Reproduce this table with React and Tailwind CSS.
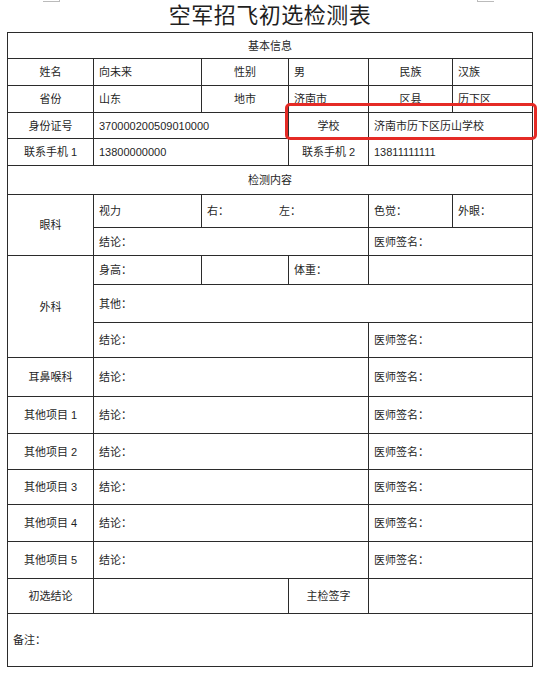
import React from 'react';

const font = { fontFamily: '"Liberation Sans", "Noto Sans CJK SC", sans-serif' };

const otherRows = ['耳鼻喉科', '其他项目 1', '其他项目 2', '其他项目 3', '其他项目 4', '其他项目 5'];
const otherHeights = ['h-[39px]', 'h-[37px]', 'h-[36px]', 'h-[35px]', 'h-[37px]', 'h-[37px]'];

function Label({ children, ...rest }) {
  return (
    <td className="border border-[#2b2b2b] text-center align-middle" {...rest}>
      {children}
    </td>
  );
}

function Value({ children, ...rest }) {
  return (
    <td className="border border-[#2b2b2b] pl-[5px] text-left align-middle" {...rest}>
      {children}
    </td>
  );
}

export default function App() {
  return (
    <div className="relative w-[540px] h-[675px] bg-white text-[#1f1f1f] overflow-hidden" style={font}>
      {/* page corner marks */}
      <div className="absolute left-[43px] top-0 w-[17px] h-[2px] border-b border-r border-[#bbb]" />
      <div className="absolute left-[477px] top-0 w-[17px] h-[2px] border-b border-l border-[#bbb]" />

      {/* Title */}
      <h1 className="h-[32px] pt-[2px] text-center text-[22px] leading-[28px] font-normal tracking-[0.5px]">
        空军招飞初选检测表
      </h1>

      {/* Form */}
      <div className="relative ml-[7px] w-[525px]">
        <table className="w-[525px] table-fixed border-collapse text-[11px] leading-[14px]">
          <colgroup>
            <col className="w-[86px]" />
            <col className="w-[108px]" />
            <col className="w-[87px]" />
            <col className="w-[80px]" />
            <col className="w-[84px]" />
            <col className="w-[80px]" />
          </colgroup>
          <tbody>
            <tr className="h-[26px]">
              <Label colSpan={6}>基本信息</Label>
            </tr>
            <tr className="h-[27px]">
              <Label>姓名</Label>
              <Value>向未来</Value>
              <Label>性别</Label>
              <Value>男</Value>
              <Label>民族</Label>
              <Value>汉族</Value>
            </tr>
            <tr className="h-[27px]">
              <Label>省份</Label>
              <Value>山东</Value>
              <Label>地市</Label>
              <Value>济南市</Value>
              <Label>区县</Label>
              <Value>历下区</Value>
            </tr>
            <tr className="h-[26px]">
              <Label>身份证号</Label>
              <Value colSpan={2}>370000200509010000</Value>
              <Label>学校</Label>
              <Value colSpan={2}>济南市历下区历山学校</Value>
            </tr>
            <tr className="h-[27px]">
              <Label>联系手机 1</Label>
              <Value colSpan={2}>13800000000</Value>
              <Label>联系手机 2</Label>
              <Value colSpan={2}>13811111111</Value>
            </tr>
            <tr className="h-[29px]">
              <Label colSpan={6}>检测内容</Label>
            </tr>

            {/* 眼科 */}
            <tr className="h-[33px]">
              <Label rowSpan={2}>眼科</Label>
              <Value>视力</Value>
              <Value colSpan={2}>
                <span className="inline-block w-[72px]">右：</span>
                <span>左：</span>
              </Value>
              <Value>色觉：</Value>
              <Value>外眼：</Value>
            </tr>
            <tr className="h-[28px]">
              <Value colSpan={3}>结论：</Value>
              <Value colSpan={2}>医师签名：</Value>
            </tr>

            {/* 外科 */}
            <tr className="h-[29px]">
              <Label rowSpan={3}>外科</Label>
              <Value>身高：</Value>
              <Value />
              <Value>体重：</Value>
              <Value colSpan={2} />
            </tr>
            <tr className="h-[38px]">
              <Value colSpan={5}>其他：</Value>
            </tr>
            <tr className="h-[35px]">
              <Value colSpan={3}>结论：</Value>
              <Value colSpan={2}>医师签名：</Value>
            </tr>

            {otherRows.map((name, i) => (
              <tr key={name} className={otherHeights[i]}>
                <Label>{name}</Label>
                <Value colSpan={3}>结论：</Value>
                <Value colSpan={2}>医师签名：</Value>
              </tr>
            ))}

            <tr className="h-[35px]">
              <Label>初选结论</Label>
              <Value colSpan={2} />
              <Label>主检签字</Label>
              <Value colSpan={2} />
            </tr>
            <tr className="h-[53px]">
              <Value colSpan={6}>备注：</Value>
            </tr>
          </tbody>
        </table>

        {/* highlight around 学校 row */}
        <div className="absolute left-[278px] top-[71px] w-[252px] h-[37px] rounded-[5px] border-[3px] border-[#e52b26]" />
      </div>
    </div>
  );
}
